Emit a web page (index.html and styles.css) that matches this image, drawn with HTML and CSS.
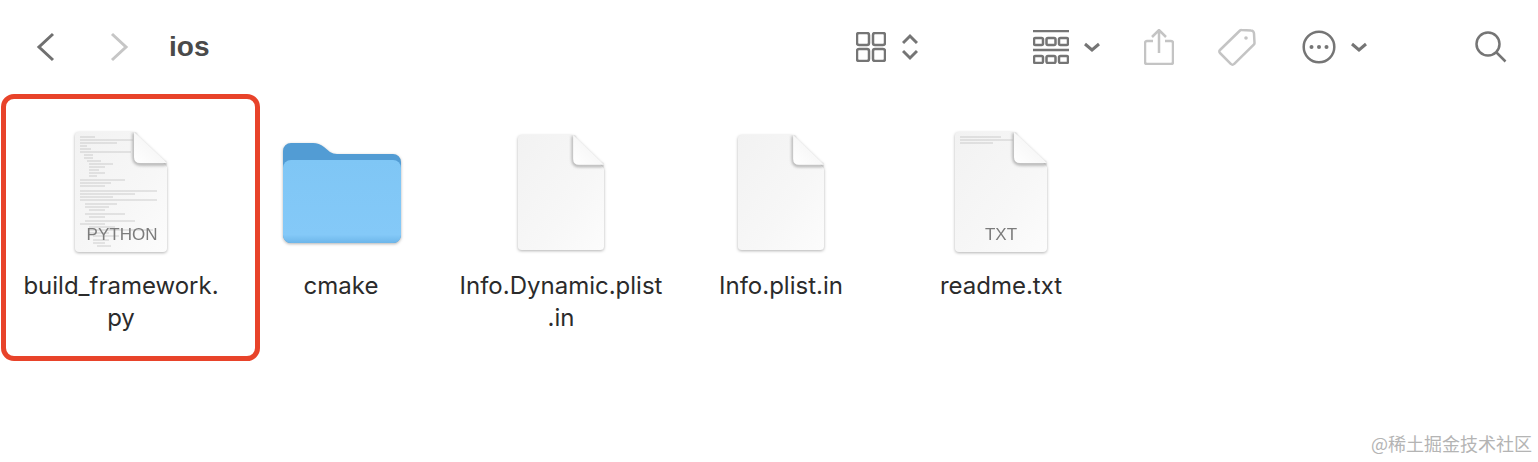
FILE: index.html
```html
<!DOCTYPE html>
<html lang="en">
	<head>
		<meta charset="UTF-8" />
		<meta name="viewport" content="width=device-width, initial-scale=1.0" />
		<title>ios</title>
		<link rel="stylesheet" href="styles.css">
	</head>
	<body>
		<svg class="defs" width="0" height="0" aria-hidden="true">
			<defs>
				<linearGradient id="paper" x1="0" y1="0" x2="1" y2="1">
					<stop offset="0" stop-color="#f2f2f2" />
					<stop offset="0.6" stop-color="#f7f7f7" />
					<stop offset="1" stop-color="#fcfcfc" />
				</linearGradient>
				<linearGradient id="curl" x1="0" y1="1" x2="1" y2="0">
					<stop offset="0" stop-color="#ffffff" />
					<stop offset="0.55" stop-color="#f7f7f7" />
					<stop offset="1" stop-color="#dcdcdc" />
				</linearGradient>
				<linearGradient id="folder-front" x1="0" y1="0" x2="0" y2="1">
					<stop offset="0" stop-color="#7fc6f5" />
					<stop offset="0.9" stop-color="#84c9f8" />
					<stop offset="1" stop-color="#6db6ea" />
				</linearGradient>
				<filter id="curl-shadow" x="-30%" y="-30%" width="160%" height="160%">
					<feGaussianBlur stdDeviation="1.6" />
				</filter>
				<symbol id="doc" viewBox="0 0 92 120">
					<path d="M4 0H59L92 35V116a4 4 0 0 1-4 4H4a4 4 0 0 1-4-4V4a4 4 0 0 1 4-4Z" fill="url(#paper)" />
					<path d="M59 1V25q0 7 7 7H91" fill="none" stroke="#a8a8a8" stroke-width="3" filter="url(#curl-shadow)" />
					<path d="M59 0V25q0 6 6 6H92Z" fill="url(#curl)" />
				</symbol>
			</defs>
		</svg>

		<header class="toolbar">
			<svg class="tool nav" width="20" height="30" viewBox="0 0 20 30"><path d="M17 2 3 15l14 13" stroke="#707070" stroke-width="3" /></svg>
			<svg class="tool nav next" width="20" height="30" viewBox="0 0 20 30"><path d="M3 2l14 13L3 28" stroke="#c6c6c6" stroke-width="3" /></svg>
			<h1 class="title">ios</h1>

			<svg class="tool view" width="30" height="30" viewBox="0 0 30 30">
				<rect x="1" y="1" width="12" height="12" rx="2" />
				<rect x="17" y="1" width="12" height="12" rx="2" />
				<rect x="1" y="17" width="12" height="12" rx="2" />
				<rect x="17" y="17" width="12" height="12" rx="2" />
			</svg>
			<svg class="tool updown" width="16" height="28" viewBox="0 0 16 28"><path d="M1 10l7-7 7 7M1 18l7 7 7-7" /></svg>

			<svg class="tool group" width="36" height="34" viewBox="0 0 36 34">
				<path d="M0 1H36M0 20H36" />
				<rect x="1" y="8" width="9" height="7" rx="1.5" />
				<rect x="13.5" y="8" width="9" height="7" rx="1.5" />
				<rect x="26" y="8" width="9" height="7" rx="1.5" />
				<rect x="1" y="26" width="9" height="7" rx="1.5" />
				<rect x="13.5" y="26" width="9" height="7" rx="1.5" />
				<rect x="26" y="26" width="9" height="7" rx="1.5" />
			</svg>
			<svg class="tool caret" width="16" height="10" viewBox="0 0 16 10"><path d="M1 2l7 6 7-6" /></svg>

			<svg class="tool share" width="30" height="36" viewBox="0 0 30 36">
				<path d="M9 12H3a2 2 0 0 0-2 2v19a2 2 0 0 0 2 2h24a2 2 0 0 0 2-2V14a2 2 0 0 0-2-2h-6" />
				<path d="M15 24V2M8 8l7-7 7 7" />
			</svg>
			<svg class="tool tag" width="38" height="38" viewBox="0 0 38 38">
				<path d="M2 22 22 2.500a2 2 0 0 1 1.500-.5L33 2.500a3 3 0 0 1 3 3L36.500 15a2 2 0 0 1-.5 1.500L16 36a2 2 0 0 1-3 0L2 25a2 2 0 0 1 0-3Z" />
				<circle class="tag-hole" cx="28" cy="10" r="1.800" />
			</svg>

			<svg class="tool more" width="34" height="34" viewBox="0 0 34 34">
				<circle cx="17" cy="17" r="15.300" />
				<circle class="dot" cx="9.500" cy="17" r="2" />
				<circle class="dot" cx="17" cy="17" r="2" />
				<circle class="dot" cx="24.500" cy="17" r="2" />
			</svg>
			<svg class="tool caret caret-more" width="16" height="10" viewBox="0 0 16 10"><path d="M1 2l7 6 7-6" /></svg>

			<svg class="tool search" width="32" height="32" viewBox="0 0 32 32">
				<circle cx="13" cy="13" r="11.500" />
				<path d="M21.500 21.500 30.500 30.500" />
			</svg>
		</header>

		<main class="files">
			<div class="file">
				<div class="file-icon">
					<svg class="doc" width="92" height="120" viewBox="0 0 92 120">
						<use href="#doc" width="92" height="120" />
						<path class="code-lines" d="M5 5H20M5 8H58M5 11H42M5 14H12M5 17H16M5 20H56M9 23H18M9 26H18M12 29H26M14 32H38M14 35H30M14 38H24M14 41H30M14 44H22M5 48H50M5 51H36M5 54H30M5 59H82M5 62H60M5 65H38M5 68H82M10 72H42M10 75H34M14 78H30M10 82H50M14 85H30M10 89H60M5 92H30M14 95H40M14 98H78M14 101H34M18 104H44M18 108H34M18 111H30M22 114H36" />
						<text class="doc-type" x="47" y="108">PYTHON</text>
					</svg>
				</div>
				<p class="file-name">build_framework.<br />py</p>
				<div class="selection"></div>
			</div>
			<div class="file">
				<div class="file-icon">
					<svg class="folder" width="118" height="100" viewBox="0 0 118 100">
						<path d="M8 0H30q6 0 11 4l6 5q3 2 7 2H110a8 8 0 0 1 8 8V92a8 8 0 0 1-8 8H8a8 8 0 0 1-8-8V8a8 8 0 0 1 8-8Z" fill="#529cd4" />
						<path d="M8 17H110a8 8 0 0 1 8 8V92a8 8 0 0 1-8 8H8a8 8 0 0 1-8-8V25a8 8 0 0 1 8-8Z" fill="url(#folder-front)" />
					</svg>
				</div>
				<p class="file-name">cmake</p>
			</div>
			<div class="file">
				<div class="file-icon">
					<svg class="doc" width="86" height="115" viewBox="0 0 92 120" preserveAspectRatio="none"><use href="#doc" width="92" height="120" /></svg>
				</div>
				<p class="file-name">Info.Dynamic.plist<br />.in</p>
			</div>
			<div class="file">
				<div class="file-icon">
					<svg class="doc" width="86" height="115" viewBox="0 0 92 120" preserveAspectRatio="none"><use href="#doc" width="92" height="120" /></svg>
				</div>
				<p class="file-name">Info.plist.in</p>
			</div>
			<div class="file">
				<div class="file-icon">
					<svg class="doc" width="92" height="120" viewBox="0 0 92 120">
						<use href="#doc" width="92" height="120" />
						<path class="code-lines" d="M5 5H46M5 8H58M5 11H38" />
						<text class="doc-type" x="46" y="108">TXT</text>
					</svg>
				</div>
				<p class="file-name">readme.txt</p>
			</div>
		</main>

		<footer class="watermark">@稀土掘金技术社区</footer>
	</body>
</html>
```

FILE: styles.css
```css
:root {
	box-sizing: border-box;
}
*,
::before,
::after {
	box-sizing: inherit;
}
body {
	margin: 0;
	height: 462px;
	display: flex;
	flex-direction: column;
	background-color: #fff;
	font-family: Inter, "Liberation Sans", Arial, sans-serif;
	overflow: hidden;
}
.defs {
	position: absolute;
}

/* toolbar */
.toolbar {
	display: flex;
	align-items: center;
	height: 94px;
	padding-left: 36px;
}
.title {
	flex: none;
	width: 40px;
	margin: 0 0 0 40px;
	font-family: "Liberation Sans", Arial, sans-serif;
	font-size: 28px;
	font-weight: 700;
	color: #4a4a4a;
}
.tool {
	flex: none;
	fill: none;
	stroke: #757575;
	stroke-width: 2.5;
}
.nav {
	stroke-width: 3;
}
.next {
	margin-left: 53px;
}
.view {
	margin-left: 647px;
}
.updown {
	margin-left: 16px;
	stroke-width: 3;
}
.group {
	margin-left: 115px;
}
.caret {
	margin-left: 15px;
	stroke-width: 3;
}
.share {
	margin-left: 44px;
	stroke: #c4c4c4;
}
.tag {
	margin-left: 44px;
	stroke: #c4c4c4;
}
.tag-hole {
	fill: #c4c4c4;
	stroke: none;
}
.more {
	margin-left: 46px;
}
.dot {
	fill: #757575;
	stroke: none;
}
.caret-more {
	margin-left: 15px;
}
.search {
	margin-left: 108px;
}

/* file grid */
.files {
	display: grid;
	grid-template-columns: repeat(5, 220px);
	padding: 37px 0 0 11px;
}
.file {
	position: relative;
	display: flex;
	flex-direction: column;
	align-items: center;
}
.file-icon {
	display: flex;
	align-items: center;
	justify-content: center;
	height: 122px;
}
.doc,
.folder {
	overflow: visible;
	filter: drop-shadow(0 1px 1.5px rgba(0, 0, 0, 0.3));
}
.folder {
	margin: 2px 0 0 2px;
}
.code-lines {
	fill: none;
	stroke: #b4b4b4;
	stroke-width: 0.6;
}
.doc-type {
	font-family: "Liberation Sans", Arial, sans-serif;
	font-size: 17px;
	fill: #7c7c7c;
	text-anchor: middle;
}
.file-name {
	margin: 17px 0 0;
	font-size: 24px;
	line-height: 32px;
	text-align: center;
	white-space: nowrap;
	color: #2b2b2b;
}
.selection {
	position: absolute;
	left: -10px;
	top: -37px;
	width: 259px;
	height: 267px;
	border: 5px solid #e8432a;
	border-radius: 13px;
}

.watermark {
	margin-top: auto;
	padding: 0 6px 7px 0;
	text-align: right;
	font-family: "Noto Sans CJK SC", sans-serif;
	font-size: 18px;
	line-height: 24px;
	color: #b4b4b4;
}
```
